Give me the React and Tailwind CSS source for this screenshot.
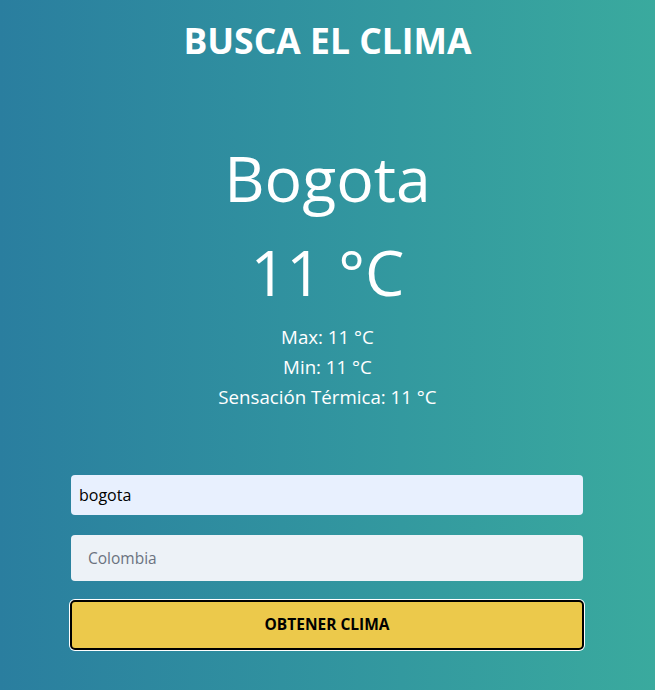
export default function App() {
  return (
    <div
      className="min-h-[690px] w-full bg-gradient-to-r from-[#2a7e9f] to-[#3aaa9e] text-white"
      style={{ fontFamily: '"Open Sans", "Noto Sans", sans-serif' }}
    >
      <h1 className="pt-5 text-center text-[35.5px] font-bold leading-[40px]">BUSCA EL CLIMA</h1>

      <div className="mt-[86px] flex flex-col items-center">
        <p className="text-[62.5px] leading-[64px]">Bogota</p>
        <p className="mt-[30px] text-[62.5px] leading-[64px]">11 °C</p>
        <div className="mt-[18px] flex flex-col items-center text-[18.7px] leading-[30px]">
          <p>Max: 11 °C</p>
          <p>Min: 11 °C</p>
          <p>Sensación Térmica: 11 °C</p>
        </div>
      </div>

      <form className="ml-[71px] mt-[63px] flex w-[512px] flex-col">
        <input
          type="text"
          defaultValue="bogota"
          className="h-[40px] w-full rounded bg-[#e8f0fe] px-2 text-[16px] text-black outline-none"
        />
        <input
          type="text"
          placeholder="Colombia"
          className="mt-5 h-[46px] w-full rounded bg-[#edf2f7] px-[17px] text-[15.5px] text-black outline-none placeholder:text-[#6b7280]"
        />
        <button
          type="button"
          className="mx-[-1px] mt-[19px] h-[50px] rounded-[5px] border-2 border-black bg-[#ecc94b] text-[15.5px] font-bold text-black shadow-[0_0_0_1px_#ffffff]"
        >
          OBTENER CLIMA
        </button>
      </form>
    </div>
  );
}
